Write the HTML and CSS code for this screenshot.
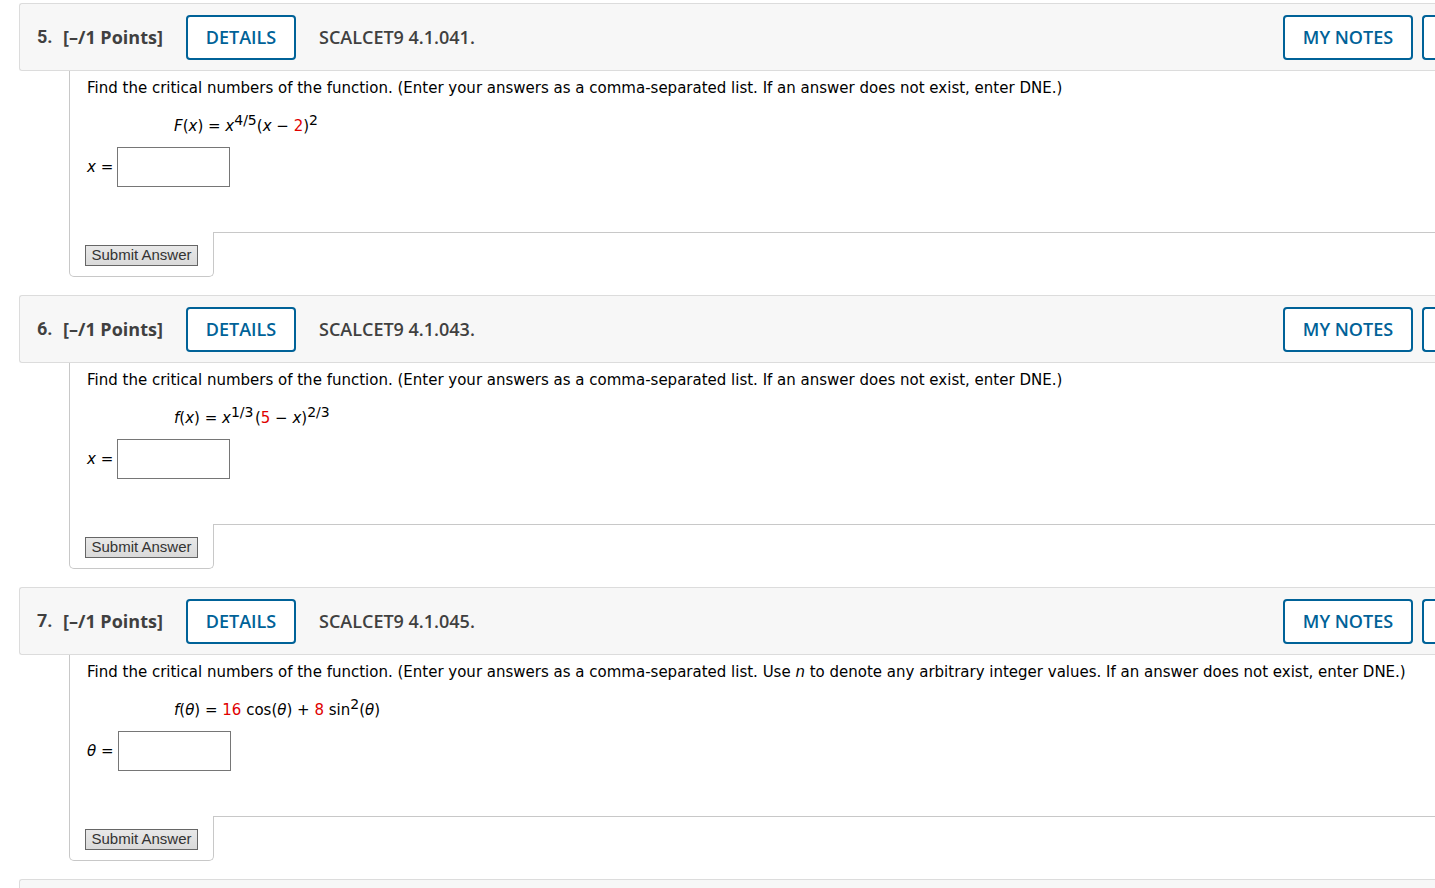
FILE: index.html
```html
<!DOCTYPE html>
<html lang="en">
<head>
<meta charset="utf-8">
<title>Assignment</title>
<link rel="stylesheet" href="styles.css">
</head>
<body>
<main class="assignment">
  <section class="question">
    <header class="question-header">
      <span class="number">5.</span>
      <span class="points">[–/1 Points]</span>
      <button class="outline-button details" type="button">DETAILS</button>
      <h2 class="source">SCALCET9 4.1.041.</h2>
      <button class="outline-button notes" type="button">MY NOTES</button>
      <button class="outline-button edge" type="button" aria-label="More"></button>
    </header>
    <div class="question-body">
      <p class="prompt">Find the critical numbers of the function. (Enter your answers as a comma-separated list. If an answer does not exist, enter DNE.)</p>
      <p class="formula"><i>F</i>(<i>x</i>) = <i>x</i><sup>4/5</sup>(<i>x</i> − <span class="value">2</span>)<sup>2</sup></p>
      <div class="answer"><label for="a5"><i>x</i> =</label><input id="a5" type="text"></div>
    </div>
    <div class="question-footer">
      <div class="submit-tab"><button class="submit" type="button">Submit Answer</button></div>
      <div class="rule"></div>
    </div>
  </section>

  <section class="question">
    <header class="question-header">
      <span class="number">6.</span>
      <span class="points">[–/1 Points]</span>
      <button class="outline-button details" type="button">DETAILS</button>
      <h2 class="source">SCALCET9 4.1.043.</h2>
      <button class="outline-button notes" type="button">MY NOTES</button>
      <button class="outline-button edge" type="button" aria-label="More"></button>
    </header>
    <div class="question-body">
      <p class="prompt">Find the critical numbers of the function. (Enter your answers as a comma-separated list. If an answer does not exist, enter DNE.)</p>
      <p class="formula"><i>f</i>(<i>x</i>) = <i>x</i><sup>1/3</sup>&#8202;(<span class="value">5</span> − <i>x</i>)<sup>2/3</sup></p>
      <div class="answer"><label for="a6"><i>x</i> =</label><input id="a6" type="text"></div>
    </div>
    <div class="question-footer">
      <div class="submit-tab"><button class="submit" type="button">Submit Answer</button></div>
      <div class="rule"></div>
    </div>
  </section>

  <section class="question">
    <header class="question-header">
      <span class="number">7.</span>
      <span class="points">[–/1 Points]</span>
      <button class="outline-button details" type="button">DETAILS</button>
      <h2 class="source">SCALCET9 4.1.045.</h2>
      <button class="outline-button notes" type="button">MY NOTES</button>
      <button class="outline-button edge" type="button" aria-label="More"></button>
    </header>
    <div class="question-body">
      <p class="prompt">Find the critical numbers of the function. (Enter your answers as a comma-separated list. Use <i>n</i> to denote any arbitrary integer values. If an answer does not exist, enter DNE.)</p>
      <p class="formula"><i>f</i>(<i>θ</i>) = <span class="value">16</span> cos(<i>θ</i>) + <span class="value">8</span> sin<sup>2</sup>(<i>θ</i>)</p>
      <div class="answer"><label for="a7"><i>θ</i> =</label><input id="a7" type="text"></div>
    </div>
    <div class="question-footer">
      <div class="submit-tab"><button class="submit" type="button">Submit Answer</button></div>
      <div class="rule"></div>
    </div>
  </section>

  <div class="next-question"></div>
</main>
</body>
</html>
```
FILE: styles.css
```css
* { box-sizing: border-box; }

body {
  margin: 0;
  background: #fff;
  color: #000;
  font: 15px/20px Verdana, "DejaVu Sans", sans-serif;
}

.assignment {
  display: flex;
  flex-direction: column;
  min-height: 100vh;
  padding: 3px 0 0 19px;
}

.question { margin-bottom: 18px; }

.question-header {
  display: flex;
  align-items: center;
  min-height: 68px;
  padding-left: 17px;
  border: 1px solid #dcdcdc;
  border-right: 0;
  border-radius: 3px 0 0 3px;
  background: #f7f7f7;
  color: #404040;
  font: 600 18px/24px "Open Sans", sans-serif;
}

.next-question {
  flex: 1;
  border: 1px solid #dcdcdc;
  border-width: 1px 0 0 1px;
  border-radius: 3px 0 0 0;
  background: #f7f7f7;
}

.number {
  width: 26px;
  font: 700 18px/24px Roboto, sans-serif;
}

.points {
  width: 123px;
  font-weight: 700;
}

.outline-button {
  height: 45px;
  padding: 0 16px;
  border: 2px solid #006298;
  border-radius: 4px;
  background: #fff;
  color: #006298;
  font: 600 18px/24px "Open Sans", sans-serif;
  white-space: nowrap;
}

.details { width: 110px; }

.source {
  margin: 0 auto 0 23px;
  font: inherit;
}

.notes {
  width: 130px;
  margin-right: 9px;
}

.edge {
  width: 13px;
  padding: 0;
  border-right: 0;
  border-radius: 4px 0 0 4px;
}

.question-body {
  margin-left: 50px;
  padding: 7px 0 45px 17px;
  border-left: 1px solid #c8c8c8;
}

.prompt { margin: 0; }

.formula { margin: 18px 0 11px 87px; }

.formula sup {
  font-size: 14px;
  line-height: 0;
}

.value { color: #e00000; }

.answer {
  display: flex;
  align-items: center;
  gap: 4px;
}

.answer input {
  width: 113px;
  height: 40px;
  padding: 2px 6px;
  border: 1px solid #767676;
  font: inherit;
}

.question-footer {
  display: flex;
  margin-left: 50px;
}

.submit-tab {
  width: 145px;
  padding: 13px 15px 10px;
  border: 1px solid #c8c8c8;
  border-top: 0;
  border-radius: 0 0 5px 5px;
}

.rule {
  flex: 1;
  border-top: 1px solid #c8c8c8;
}

.submit {
  display: block;
  width: 113px;
  height: 21px;
  padding: 0 0 2px;
  border: 1px solid #666;
  background: linear-gradient(#e8e8e8, #dadada);
  color: #333;
  font: 15px/17px "Liberation Sans", Arial, sans-serif;
}
```
